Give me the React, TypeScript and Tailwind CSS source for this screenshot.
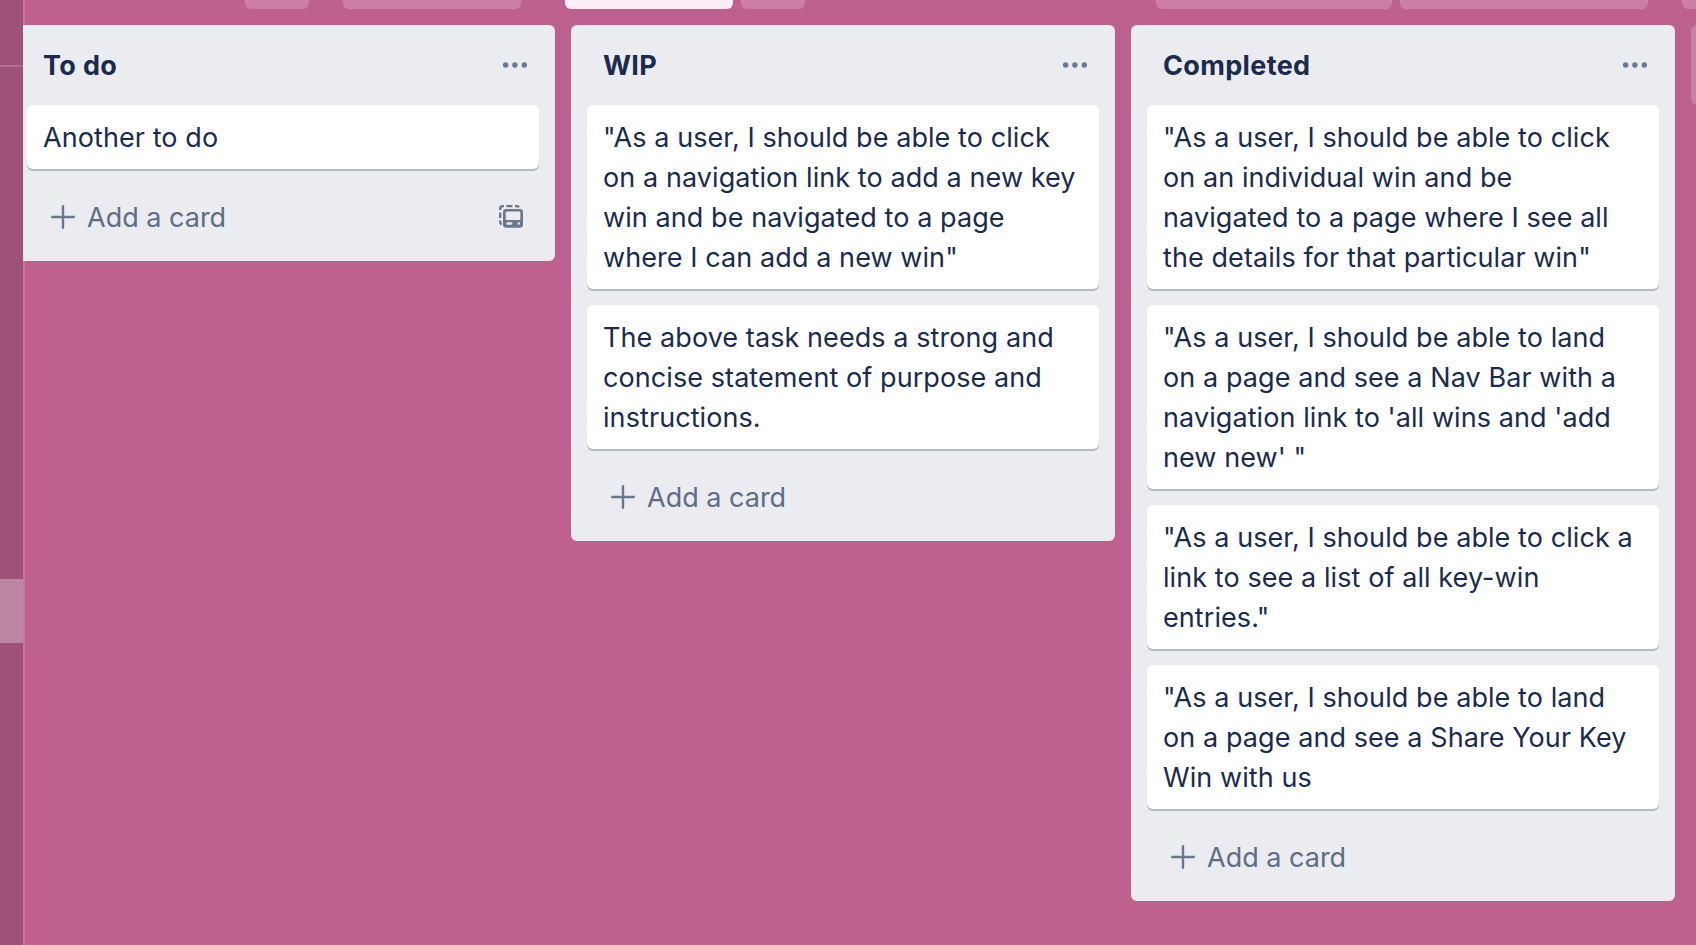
import React from "react";

type Card = string[];
type List = { title: string; cards: Card[]; template?: boolean };

const lists: List[] = [
  { title: "To do", cards: [["Another to do"]], template: true },
  {
    title: "WIP",
    cards: [
      [
        '"As a user, I should be able to click',
        "on a navigation link to add a new key",
        "win and be navigated to a page",
        'where I can add a new win"',
      ],
      ["The above task needs a strong and", "concise statement of purpose and", "instructions."],
    ],
  },
  {
    title: "Completed",
    cards: [
      [
        '"As a user, I should be able to click',
        "on an individual win and be",
        "navigated to a page where I see all",
        'the details for that particular win"',
      ],
      [
        '"As a user, I should be able to land',
        "on a page and see a Nav Bar with a",
        "navigation link to 'all wins and 'add",
        "new new' \"",
      ],
      ['"As a user, I should be able to click a', "link to see a list of all key-win", 'entries."'],
      ['"As a user, I should be able to land', "on a page and see a Share Your Key", "Win with us"],
    ],
  },
];

function Dots() {
  return (
    <svg width="26" height="8" viewBox="0 0 26 8" fill="#6b778c">
      <circle cx="3.6" cy="4" r="2.7" />
      <circle cx="12.9" cy="4" r="2.7" />
      <circle cx="22.3" cy="4" r="2.7" />
    </svg>
  );
}

function Plus() {
  return (
    <svg width="24" height="24" viewBox="0 0 24 24" stroke="#6b778c" strokeWidth="2.4" strokeLinecap="round">
      <path d="M12 1.2v21.6M1.2 12h21.6" />
    </svg>
  );
}

function TemplateIcon() {
  return (
    <svg width="24" height="24" viewBox="0 0 24 24" fill="none">
      <path
        d="M1.2 5V3.6A2.4 2.4 0 0 1 3.6 1.2H5M7.4 1.2h6M16 1.2h1.6A2.4 2.4 0 0 1 20 2.4M1.2 7.400v5.600M1.200 15.400v1.800A2.400 2.400 0 0 0 2.800 19.500"
        stroke="#6b778c"
        strokeWidth="2.3"
      />
      <path
        fillRule="evenodd"
        clipRule="evenodd"
        d="M7.200 4h13.600A3.200 3.200 0 0 1 24 7.200v12.300a3.200 3.200 0 0 1-3.200 3.200H7.200A3.200 3.200 0 0 1 4 19.500V7.200A3.200 3.200 0 0 1 7.200 4ZM7.500 6.500a.8.8 0 0 0-.8.8V15h14.600V7.300a.8.8 0 0 0-.8-.8ZM8.600 17.300a1.200 1.200 0 0 0 0 2.400h3.600a1.200 1.200 0 0 0 0-2.400ZM19.800 17.200a1.300 1.300 0 1 0 0 2.600a1.300 1.300 0 0 0 0-2.600Z"
        fill="#6b778c"
      />
    </svg>
  );
}

function ListColumn({ list }: { list: List }) {
  return (
    <section className="flex w-[544px] shrink-0 flex-col rounded-md bg-[#ebecf0]">
      <header className="flex h-20 items-center justify-between pr-[27px] pl-8">
        <h2 className="pt-0.5 text-[27px] leading-10 font-[680] tracking-[0.35px]">{list.title}</h2>
        <Dots />
      </header>
      <div className="flex flex-col gap-4 px-4">
        {list.cards.map((card, i) => (
          <article key={i} className="rounded-md bg-white px-4 pt-[13px] pb-[11px] shadow-[0_2px_0_#b3b8c8]">
            {card.map((line) => (
              <p key={line} className="whitespace-nowrap">
                {line}
              </p>
            ))}
          </article>
        ))}
      </div>
      <footer className="flex h-[92px] items-center justify-between pt-1 pr-8 pl-10 text-[#5e6c84]">
        <div className="flex items-center gap-3">
          <Plus />
          <span className="pt-0.5 tracking-[0px]">Add a card</span>
        </div>
        {list.template && <TemplateIcon />}
      </footer>
    </section>
  );
}

export default function App() {
  return (
    <div className="flex h-[945px] w-[1696px] overflow-hidden bg-[#bf618e] font-[Inter,sans-serif] text-[27px] leading-10 font-[430] tracking-[0.08px] text-[#1b2b4e]">
      <aside className="flex w-[23px] shrink-0 flex-col bg-[#9f5278]">
        <div className="mt-[65px] h-0.5 bg-[#b0708f]" />
        <div className="mt-[512px] h-16 bg-[#bb87a2]" />
      </aside>
      <main className="flex min-w-0 grow flex-col overflow-hidden shadow-[inset_2px_0_0_#c9789f]">
        <nav className="flex h-[9px] shrink-0 pl-[222px]">
          <div className="w-16 shrink-0 rounded-b-md bg-[#cc7fa4]" />
          <div className="ml-[34px] w-[178px] shrink-0 rounded-b-md bg-[#cc7fa4]" />
          <div className="ml-11 w-[168px] shrink-0 rounded-b-md bg-[#faeef4]" />
          <div className="ml-2 w-16 shrink-0 rounded-b-md bg-[#cc7fa4]" />
          <div className="ml-[351px] w-[236px] shrink-0 rounded-b-md bg-[#cc7fa4]" />
          <div className="ml-2 w-[248px] shrink-0 rounded-b-md bg-[#cc7fa4]" />
          <div className="ml-[34px] w-16 shrink-0 rounded-b-md bg-[#cc7fa4]" />
        </nav>
        <div className="mt-4 -ml-3 flex items-start gap-4">
          {lists.map((list) => (
            <ListColumn key={list.title} list={list} />
          ))}
          <div className="h-20 w-[544px] shrink-0 rounded-md bg-[#cc7fa4]" />
        </div>
      </main>
    </div>
  );
}
